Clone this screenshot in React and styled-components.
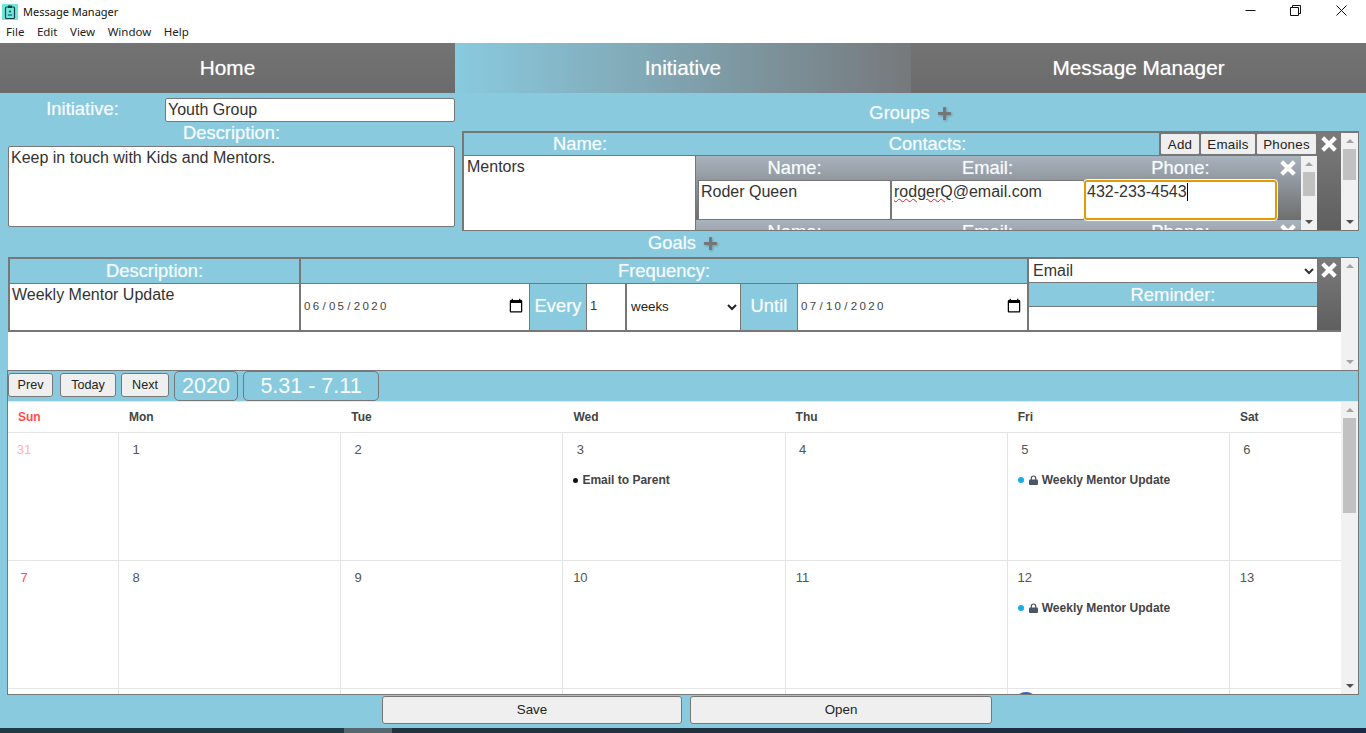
import React from 'react';
import styled, { createGlobalStyle } from 'styled-components';
import { FaPlus } from 'react-icons/fa';

const sky = '#89cadf';
const line = '#777777';
const arial = '"Liberation Sans", Arial, sans-serif';
const segoe = '"Noto Sans", "Open Sans", sans-serif';
const labelShadow = '0 0 1px rgba(255, 255, 255, 0.6)';

const GlobalStyle = createGlobalStyle`
    html, body {
        margin: 0;
        padding: 0;
        overflow: hidden;
        background: ${sky};
    }
    * {
        box-sizing: border-box;
    }
`;

const Page = styled.div`
    width: 1366px;
    height: 733px;
    display: flex;
    flex-direction: column;
    overflow: hidden;
    background: ${sky};
    font-family: ${arial};
`;

const TitleBar = styled.div`
    height: 21px;
    flex: none;
    display: flex;
    align-items: center;
    background: #fff;
    padding: 0 2px;
`;

const AppTitle = styled.span`
    margin: 2px 0 0 5px;
    font: 11px ${segoe};
    color: #111;
    flex: 1;
`;

const WinButton = styled.div`
    width: 45.5px;
    height: 21px;
    display: flex;
    align-items: center;
    justify-content: center;
`;

const MenuBar = styled.div`
    height: 22px;
    flex: none;
    display: flex;
    align-items: center;
    gap: 12.5px;
    padding: 0 0 2px 6px;
    background: #fff;
    font: 11.5px ${segoe};
    color: #222;
`;

const Nav = styled.nav`
    height: 50px;
    flex: none;
    display: grid;
    grid-template-columns: 455px 456px 455px;
`;

const Tab = styled.div`
    display: flex;
    align-items: center;
    justify-content: center;
    font-size: 20.8px;
    color: #fff;
    text-shadow: ${labelShadow};
    background: ${p =>
        p.$active
            ? `linear-gradient(90deg, ${sky} 0%, #76797c 100%)`
            : 'linear-gradient(180deg, #737373, #6b6b6b)'};
`;

const Top = styled.div`
    height: 138px;
    flex: none;
    display: flex;
`;

const LeftForm = styled.div`
    width: 462px;
    flex: none;
    padding: 5px 7px 0 8px;
    display: flex;
    flex-direction: column;
`;

const InitiativeRow = styled.div`
    display: flex;
    align-items: center;
    gap: 8px;
    height: 24px;
`;

const Label = styled.div`
    font-size: 18.4px;
    color: #f4fbfd;
    text-align: center;
    text-shadow: ${labelShadow};
    width: ${p => p.$width || 'auto'};
    flex: ${p => (p.$width ? 'none' : '0 1 auto')};
    margin-bottom: ${p => p.$lift || 0};
`;

const TextField = styled.div`
    flex: ${p => p.$flex || 1};
    height: ${p => p.$height || '100%'};
    min-width: 0;
    background: #fff;
    border: 1px solid ${line};
    border-radius: ${p => p.$radius || 0};
    padding: 0 2px;
    font-size: 16px;
    line-height: 22px;
    color: #333;
    white-space: nowrap;
`;

const DescriptionLabel = styled(Label)`
    height: 24px;
    line-height: 21px;
`;

const GroupsArea = styled.div`
    flex: 1;
    display: flex;
    flex-direction: column;
    padding-right: 7px;
`;

const Heading = styled.div`
    height: ${p => p.$height};
    flex: none;
    display: flex;
    align-items: center;
    justify-content: center;
    gap: 7px;
    font-size: 18.4px;
    color: #f4fbfd;
    text-shadow: ${labelShadow};
    padding-top: ${p => p.$top || 0};
    padding-bottom: ${p => p.$bottom || 0};
`;

const PlusIcon = styled(FaPlus)`
    width: 15px;
    height: 15px;
    color: #757575;
    filter: drop-shadow(1px 1px 1px rgba(80, 90, 100, 0.45));
`;

const GroupPanel = styled.div`
    height: 100px;
    flex: none;
    display: flex;
    border: 2px solid ${line};
    border-right-width: 1px;
    border-bottom-width: 1px;
    overflow: hidden;
`;

const GroupMain = styled.div`
    flex: 1;
    min-width: 0;
    display: flex;
    flex-direction: column;
`;

const GroupHead = styled.div`
    height: 23px;
    flex: none;
    display: flex;
    border-bottom: 1px solid ${line};
`;

const HeadCell = styled.div`
    width: ${p => p.$width};
    flex: none;
    text-align: center;
    font-size: 18.4px;
    line-height: 22px;
    color: #f4fbfd;
    text-shadow: ${labelShadow};
`;

const ButtonGroup = styled.div`
    flex: 1;
    display: flex;
    gap: 2px;
    padding: 1px 0 1px 2px;
    background: #777;
`;

const SmallButton = styled.button`
    width: ${p => p.$width};
    flex: none;
    height: 20px;
    padding: 0;
    background: #efefef;
    border: none;
    border-radius: 1px;
    font: 13.33px ${arial};
    letter-spacing: 0.25px;
    color: #222;
`;

const GroupBody = styled.div`
    flex: 1;
    min-height: 0;
    display: flex;
`;

const GroupName = styled.div`
    width: 232px;
    flex: none;
    background: #fff;
    border-right: 1px solid ${line};
    padding: 1px 3px;
    font-size: 16px;
    line-height: 20px;
    color: #333;
`;

const ContactList = styled.div`
    flex: 1;
    min-width: 0;
    overflow: hidden;
`;

const ContactRow = styled.div`
    height: 64px;
    padding: 0 0 0 2px;
    background: linear-gradient(180deg, #a9b3bd 0%, #8f969d 40%, #6e6e6e 100%);
`;

const ContactHead = styled.div`
    height: 24px;
    display: grid;
    grid-template-columns: 193px 193px 193px 1fr;
    align-items: center;
    text-align: center;
    font-size: 18.4px;
    color: #f4fbfd;
    text-shadow: ${labelShadow};
`;

const ContactFields = styled.div`
    height: 40px;
    display: grid;
    grid-template-columns: 193px 193px 193px;
`;

const ActiveField = styled(TextField)`
    border: 2px solid #e59a00;
    border-radius: 3px;
    outline: 1px solid #fff;
    padding: 0 1px;
    line-height: 20px;
`;

const Caret = styled.span`
    display: inline-block;
    width: 1px;
    height: 18px;
    background: #000;
    vertical-align: -4px;
`;

const Misspelt = styled.span`
    text-decoration: underline wavy #e02020 1px;
    text-underline-offset: 1px;
`;

const DarkColumn = styled.div`
    width: 24px;
    flex: none;
    display: flex;
    justify-content: center;
    padding-top: 3px;
    background: linear-gradient(180deg, #7a7a7a, #5f5f5f);
`;

const RowClose = styled.div`
    display: flex;
    justify-content: center;
    padding-right: 3px;
`;

const Track = styled.div`
    width: ${p => p.$width || '17px'};
    flex: none;
    display: flex;
    flex-direction: column;
    align-items: center;
    background: #f1f1f1;
    padding: 6px 2px;
`;

const ArrowUp = styled.div`
    flex: none;
    width: 0;
    height: 0;
    border-left: 4px solid transparent;
    border-right: 4px solid transparent;
    border-bottom: 4px solid ${p => (p.$dim ? '#a3a3a3' : '#505050')};
`;

const ArrowDown = styled.div`
    flex: none;
    width: 0;
    height: 0;
    margin-top: auto;
    border-left: 4px solid transparent;
    border-right: 4px solid transparent;
    border-top: 4px solid ${p => (p.$dim ? '#a3a3a3' : '#505050')};
`;

const Thumb = styled.div`
    width: 100%;
    flex: none;
    background: #c1c1c1;
    margin-top: ${p => p.$top}px;
    height: ${p => p.$height}px;
`;

const Scrollbar = ({ top, height, width, dim }) => (
    <Track $width={width}>
        <ArrowUp $dim />
        {height ? <Thumb $top={top} $height={height} /> : null}
        <ArrowDown $dim={dim} />
    </Track>
);

const GoalsPanel = styled.div`
    height: 113px;
    flex: none;
    margin: 0 7px 0 8px;
    display: flex;
    background: #fff;
    border-top: 1px solid ${line};
    border-right: 1px solid ${line};
`;

const GoalMain = styled.div`
    flex: 1;
    min-width: 0;
`;

const GoalRow = styled.div`
    height: 74px;
    display: grid;
    grid-template-columns: 289px 728px 290px 24px;
    border-top: 1px solid ${line};
    border-bottom: 2px solid ${line};
    border-left: 2px solid ${line};
`;

const GoalColumn = styled.div`
    display: flex;
    flex-direction: column;
    min-width: 0;
    border-left: ${p => (p.$divider ? `2px solid ${line}` : 'none')};
`;

const GoalHead = styled.div`
    height: ${p => p.$height || '25px'};
    flex: none;
    text-align: center;
    font-size: 18.4px;
    line-height: 24px;
    color: #f4fbfd;
    text-shadow: ${labelShadow};
    background: ${sky};
    border-bottom: 1px solid ${line};
`;

const GoalText = styled.div`
    flex: 1;
    background: #fff;
    padding: 0 2px;
    font-size: 16px;
    line-height: 22px;
    color: #333;
`;

const FrequencyBody = styled.div`
    flex: 1;
    display: grid;
    grid-template-columns: 228px 58px 38px 115px 58px 1fr;
    min-height: 0;
`;

const DateField = styled.input`
    width: 100%;
    min-width: 0;
    height: 100%;
    border: none;
    outline: none;
    background: #fff;
    padding: 0 5px 2px 2px;
    font: 11.5px ${arial};
    letter-spacing: 2.3px;
    color: #444;

    &::-webkit-calendar-picker-indicator {
        width: 16px;
        height: 16px;
        margin: 0;
        padding: 0;
    }
`;

const Inset = styled.div`
    display: flex;
    align-items: center;
    justify-content: center;
    padding-bottom: 2px;
    font-size: 18.4px;
    color: #f4fbfd;
    text-shadow: ${labelShadow};
    background: ${sky};
    border-left: 1px solid ${line};
    border-right: 1px solid ${line};
`;

const NumberField = styled.div`
    background: #fff;
    padding-left: 3px;
    font-size: 13px;
    line-height: 43px;
    color: #333;
`;

const UnitSelect = styled.select`
    height: 100%;
    width: 100%;
    min-width: 0;
    background: #fff;
    border: none;
    border-left: 2px solid ${line};
    outline: none;
    padding: 0 0 2px 0;
    font: 13.33px ${arial};
    color: #222;
`;

const KindSelect = styled.select`
    height: 24px;
    flex: none;
    width: 100%;
    background: #fff;
    border: none;
    border-bottom: 1px solid ${line};
    outline: none;
    font: 16px ${arial};
    color: #333;
`;

const ReminderField = styled.div`
    flex: 1;
    background: #fff;
`;

const CalendarBox = styled.div`
    height: 325px;
    flex: none;
    margin: 0 7px 0 7px;
    border: 1px solid ${line};
    display: flex;
    flex-direction: column;
    overflow: hidden;
`;

const CalToolbar = styled.div`
    height: 30px;
    flex: none;
    display: flex;
    align-items: flex-start;
    gap: 5px;
    background: ${sky};
`;

const CalButton = styled.button`
    width: ${p => p.$width};
    height: 24px;
    margin-top: 2px;
    margin-right: ${p => p.$gap || 0};
    padding: 0;
    background: #efefef;
    border: 1px solid ${line};
    border-radius: 3px;
    font: 12.6px ${arial};
    color: #222;
`;

const CalTitle = styled.div`
    width: ${p => p.$width};
    height: 30px;
    border: 1px solid ${line};
    border-radius: 5px;
    display: flex;
    align-items: center;
    justify-content: center;
    font-size: 21.5px;
    color: #f6fcfe;
`;

const CalBody = styled.div`
    flex: 1;
    min-height: 0;
    display: flex;
    background: #fff;
    border-top: 1px solid #d8edf4;
`;

const CalMain = styled.div`
    flex: 1;
    min-width: 0;
    overflow: hidden;
`;

const Week = styled.div`
    height: ${p => p.$height};
    display: grid;
    grid-template-columns: 111px repeat(5, 222.2px) 1fr;
    border-bottom: 1px solid #e4e4e4;
`;

const DayName = styled.div`
    padding: 8px 0 0 10px;
    font-size: 12px;
    font-weight: 700;
    color: ${p => (p.$first ? '#ff4d4d' : '#444')};
`;

const DayCell = styled.div`
    min-width: 0;
    border-right: ${p => (p.$last ? 'none' : '1px solid #e4e4e4')};
    padding: 9px 0 0 10px;
`;

const DateNum = styled.div`
    width: 24px;
    height: ${p => (p.$today ? '24px' : '16px')};
    margin-left: ${p => (p.$first ? '-6px' : p.$today ? '-4px' : '-5px')};
    margin-top: ${p => (p.$today ? '-6px' : '0')};
    border-radius: 50%;
    text-align: center;
    font-size: 13px;
    line-height: 16px;
    color: ${p => p.$color || '#555'};
    background: ${p => (p.$today ? '#1f63d6' : 'transparent')};
`;

const EventRow = styled.div`
    display: flex;
    align-items: center;
    margin-top: 15px;
    font-size: 12px;
    font-weight: 700;
    color: #444;
    white-space: nowrap;
`;

const Dot = styled.span`
    width: ${p => p.$size};
    height: ${p => p.$size};
    flex: none;
    border-radius: 50%;
    margin-right: ${p => p.$gap};
    background: ${p => p.$color};
`;

const Footer = styled.div`
    height: 33px;
    flex: none;
    display: flex;
    justify-content: center;
    gap: 8px;
    padding: 1px 0 0 8px;
`;

const FooterButton = styled.button`
    width: ${p => p.$width};
    height: 28px;
    padding: 0 0 2px;
    background: #efefef;
    border: 1px solid ${line};
    border-radius: 3px;
    font: 13.33px ${arial};
    color: #222;
`;

const Taskbar = styled.div`
    height: 5px;
    flex: none;
    background: linear-gradient(90deg, #1f3a44 0, #1f3a44 344px, #55686f 344px, #55686f 392px, #20343f 392px, #1b2a44 100%);
`;

const AppIconWrap = styled.svg`
    margin-top: 3px;
    flex: none;
`;

const AppIcon = () => (
    <AppIconWrap width="16" height="16" viewBox="0 0 16 16">
        <rect width="16" height="16" fill="#6fe8d8" />
        <rect x="3.5" y="3" width="9" height="11.5" rx="1" fill="none" stroke="#17404a" strokeWidth="1.2" />
        <rect x="6" y="1.5" width="4" height="2.5" fill="#17404a" />
        <circle cx="8" cy="7.5" r="1" fill="#17404a" />
        <rect x="5.8" y="10.5" width="4.4" height="1" fill="#17404a" />
    </AppIconWrap>
);

const MinimizeIcon = () => (
    <svg width="11" height="11" viewBox="0 0 11 11">
        <path d="M0.5 5.5H10.5" stroke="#111" fill="none" />
    </svg>
);

const RestoreIcon = () => (
    <svg width="11" height="11" viewBox="0 0 11 11">
        <path d="M0.5 2.5H8.5V10.5H0.5Z M2.5 2.5V0.5H10.5V8.5H8.5" stroke="#111" fill="none" />
    </svg>
);

const CloseWinIcon = () => (
    <svg width="11" height="11" viewBox="0 0 11 11">
        <path d="M0.5 0.5L10.5 10.5M10.5 0.5L0.5 10.5" stroke="#111" fill="none" />
    </svg>
);

const CloseIcon = () => (
    <svg width="16" height="16" viewBox="0 0 16 16">
        <path d="M3.2 3.2L12.8 12.8M12.8 3.2L3.2 12.8" stroke="#fff" strokeWidth="4.2" strokeLinecap="square" fill="none" />
    </svg>
);

const LockWrap = styled.svg`
    flex: none;
    margin-right: 4px;
`;

const LockIcon = () => (
    <LockWrap width="9" height="10" viewBox="0 0 9 10">
        <path d="M2.3 5V3.2a2.2 2.2 0 0 1 4.4 0V5" stroke="#4a5568" strokeWidth="1.2" fill="none" />
        <rect x="0" y="4.5" width="9" height="5.5" rx="1" fill="#4a5568" />
    </LockWrap>
);

const menuItems = ['File', 'Edit', 'View', 'Window', 'Help'];
const dayNames = ['Sun', 'Mon', 'Tue', 'Wed', 'Thu', 'Fri', 'Sat'];

const weeks = [
    { height: '128px', days: [31, 1, 2, 3, 4, 5, 6] },
    { height: '128px', days: [7, 8, 9, 10, 11, 12, 13] },
    { height: '128px', days: [14, 15, 16, 17, 18, 19, 20] },
];

const weeklyUpdate = { title: 'Weekly Mentor Update', color: '#14ade6', locked: true };
const events = {
    3: { title: 'Email to Parent', color: '#111', locked: false },
    5: weeklyUpdate,
    12: weeklyUpdate,
};

const dateColor = day => {
    if (day === 31) return '#ffb3b3';
    if (day === 7 || day === 14) return '#ff4d4d';
    return '#555';
};

const Contact = () => (
    <ContactRow>
        <ContactHead>
            <div>Name:</div>
            <div>Email:</div>
            <div>Phone:</div>
            <RowClose>
                <CloseIcon />
            </RowClose>
        </ContactHead>
        <ContactFields>
            <TextField>Roder Queen</TextField>
            <TextField>
                <Misspelt>rodgerQ</Misspelt>@email.com
            </TextField>
            <ActiveField>
                432-233-4543
                <Caret />
            </ActiveField>
        </ContactFields>
    </ContactRow>
);

const Calendar = () => (
    <CalBody>
        <CalMain>
            <Week $height="31px">
                {dayNames.map((name, i) => (
                    <DayName key={name} $first={i === 0}>
                        {name}
                    </DayName>
                ))}
            </Week>
            {weeks.map(week => (
                <Week key={week.days[0]} $height={week.height}>
                    {week.days.map((day, i) => (
                        <DayCell key={day} $first={i === 0} $last={i === 6}>
                            <DateNum $color={dateColor(day)} $today={day === 19} $first={i === 0}>
                                {day === 19 ? null : day}
                            </DateNum>
                            {events[day] && (
                                <EventRow>
                                    <Dot
                                        $color={events[day].color}
                                        $size={events[day].locked ? '6px' : '5px'}
                                        $gap={events[day].locked ? '5px' : '4px'}
                                    />
                                    {events[day].locked && <LockIcon />}
                                    {events[day].title}
                                </EventRow>
                            )}
                        </DayCell>
                    ))}
                </Week>
            ))}
        </CalMain>
        <Scrollbar top={6} height={95} />
    </CalBody>
);

export default function App() {
    return (
        <Page>
            <GlobalStyle />
            <TitleBar>
                <AppIcon />
                <AppTitle>Message Manager</AppTitle>
                <WinButton>
                    <MinimizeIcon />
                </WinButton>
                <WinButton>
                    <RestoreIcon />
                </WinButton>
                <WinButton>
                    <CloseWinIcon />
                </WinButton>
            </TitleBar>
            <MenuBar>
                {menuItems.map(item => (
                    <span key={item}>{item}</span>
                ))}
            </MenuBar>
            <Nav>
                <Tab>Home</Tab>
                <Tab $active>Initiative</Tab>
                <Tab>Message Manager</Tab>
            </Nav>
            <Top>
                <LeftForm>
                    <InitiativeRow>
                        <Label $width="149px" $lift="2px">Initiative:</Label>
                        <TextField $radius="2px">Youth Group</TextField>
                    </InitiativeRow>
                    <DescriptionLabel>Description:</DescriptionLabel>
                    <TextField $flex="none" $height="81px" $radius="2px">
                        Keep in touch with Kids and Mentors.
                    </TextField>
                </LeftForm>
                <GroupsArea>
                    <Heading $height="38px" $top="2px">
                        Groups <PlusIcon />
                    </Heading>
                    <GroupPanel>
                        <GroupMain>
                            <GroupHead>
                                <HeadCell $width="232px">Name:</HeadCell>
                                <HeadCell $width="463px">Contacts:</HeadCell>
                                <ButtonGroup>
                                    <SmallButton $width="38px">Add</SmallButton>
                                    <SmallButton $width="54px">Emails</SmallButton>
                                    <SmallButton $width="59px">Phones</SmallButton>
                                </ButtonGroup>
                            </GroupHead>
                            <GroupBody>
                                <GroupName>Mentors</GroupName>
                                <ContactList>
                                    <Contact />
                                    <Contact />
                                </ContactList>
                                <Scrollbar top={6} height={24} width="16px" />
                            </GroupBody>
                        </GroupMain>
                        <DarkColumn>
                            <CloseIcon />
                        </DarkColumn>
                        <Scrollbar top={6} height={31} />
                    </GroupPanel>
                </GroupsArea>
            </Top>
            <Heading $height="26px" $bottom="2px">
                Goals <PlusIcon />
            </Heading>
            <GoalsPanel>
                <GoalMain>
                    <GoalRow>
                        <GoalColumn>
                            <GoalHead>Description:</GoalHead>
                            <GoalText>Weekly Mentor Update</GoalText>
                        </GoalColumn>
                        <GoalColumn $divider>
                            <GoalHead>Frequency:</GoalHead>
                            <FrequencyBody>
                                <DateField type="date" defaultValue="2020-06-05" />
                                <Inset>Every</Inset>
                                <NumberField>1</NumberField>
                                <UnitSelect defaultValue="weeks">
                                    <option>weeks</option>
                                </UnitSelect>
                                <Inset>Until</Inset>
                                <DateField type="date" defaultValue="2020-07-10" />
                            </FrequencyBody>
                        </GoalColumn>
                        <GoalColumn $divider>
                            <KindSelect defaultValue="Email">
                                <option>Email</option>
                            </KindSelect>
                            <GoalHead $height="24px">Reminder:</GoalHead>
                            <ReminderField />
                        </GoalColumn>
                        <DarkColumn>
                            <CloseIcon />
                        </DarkColumn>
                    </GoalRow>
                </GoalMain>
                <Scrollbar dim />
            </GoalsPanel>
            <CalendarBox>
                <CalToolbar>
                    <CalButton $width="45px" $gap="2px">Prev</CalButton>
                    <CalButton $width="56px">Today</CalButton>
                    <CalButton $width="48px">Next</CalButton>
                    <CalTitle $width="64px">2020</CalTitle>
                    <CalTitle $width="136px">5.31 - 7.11</CalTitle>
                </CalToolbar>
                <Calendar />
            </CalendarBox>
            <Footer>
                <FooterButton $width="300px">Save</FooterButton>
                <FooterButton $width="302px">Open</FooterButton>
            </Footer>
            <Taskbar />
        </Page>
    );
}
